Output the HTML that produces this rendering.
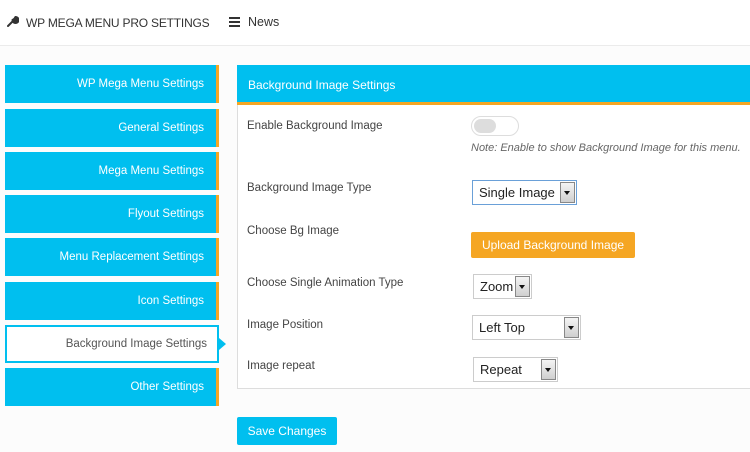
<!DOCTYPE html>
<html><head><style>
*{box-sizing:border-box;margin:0;padding:0}
body{width:750px;height:452px;background:#fcfcfc;font-family:"Liberation Sans",sans-serif;color:#444;position:relative;overflow:hidden;font-size:12px}
.a{position:absolute}
.top{left:0;top:0;width:750px;height:46px;border-bottom:1px solid #ebebeb;background:#fff}
.tab{position:absolute;left:5px;width:214px;height:38px;background:#00bfef;border-right:3px solid #f5a623;color:#fff;text-align:right;padding-right:12px;line-height:38px;font-size:11.5px}
.tab.act{background:#fff;border:2px solid #00bfef;color:#555;line-height:34px;padding-right:10px}
.lbl{position:absolute;left:247px;font-size:11.5px;color:#444}
.sel{position:absolute;height:25px;border:1px solid #ccc;background:#fff;font-size:13px;color:#222;padding-left:6px;line-height:23px}
.sel i{position:absolute;right:1px;top:1px;bottom:1px;width:15px;border:1px solid #888;background:linear-gradient(#f4f4f4,#cfcfcf)}
.sel i:after{content:"";position:absolute;left:3px;top:8px;border-left:3px solid transparent;border-right:3px solid transparent;border-top:4px solid #111}
</style></head><body>
<div class="a top"></div>
<svg class="a" style="left:7px;top:15px" width="12" height="12" viewBox="0 0 12 12"><path d="M1 11 L6 6 M5.5 5 A3 3 0 1 0 8.5 2 L7.5 3.5 L8.8 3.2 L8.5 4.5 L7 4 Z" stroke="#333" stroke-width="2" fill="#333" stroke-linecap="round"/></svg>
<div class="a" style="left:26px;top:16px;font-size:12px;color:#333;letter-spacing:-0.2px">WP MEGA MENU PRO SETTINGS</div>
<div class="a" style="left:229px;top:17px;width:11px;height:2px;background:#333;box-shadow:0 4px 0 #333,0 8px 0 #333"></div>
<div class="a" style="left:248px;top:15px;font-size:12.5px;color:#333">News</div>

<div class="tab" style="top:65px">WP Mega Menu Settings</div>
<div class="tab" style="top:109px">General Settings</div>
<div class="tab" style="top:152px">Mega Menu Settings</div>
<div class="tab" style="top:195px">Flyout Settings</div>
<div class="tab" style="top:238px">Menu Replacement Settings</div>
<div class="tab" style="top:282px">Icon Settings</div>
<div class="tab act" style="top:325px">Background Image Settings</div>
<div class="a" style="left:219px;top:338px;border-top:6px solid transparent;border-bottom:6px solid transparent;border-left:7px solid #00bfef"></div>
<div class="tab" style="top:368px">Other Settings</div>

<div class="a" style="left:237px;top:65px;width:520px;height:324px;background:#fff;border:1px solid #ddd"></div>
<div class="a" style="left:237px;top:65px;width:520px;height:40px;background:#00bfef;border-bottom:3px solid #f5a623;color:#fff;font-size:12px;padding:13px 0 0 11px">Background Image Settings</div>

<div class="lbl" style="top:120px">Enable Background Image</div>
<div class="a" style="left:471px;top:116px;width:48px;height:20px;border:1px solid #ddd;border-radius:10px;background:#fff"><div style="position:absolute;left:2px;top:2px;width:22px;height:14px;border-radius:7px;background:#ddd"></div></div>
<div class="a" style="left:471px;top:142px;font-size:11px;font-style:italic;color:#666;white-space:nowrap">Note: Enable to show Background Image for this menu.</div>

<div class="lbl" style="top:182px">Background Image Type</div>
<div class="sel" style="left:472px;top:180px;width:105px;border-color:#6aa0d8">Single Image<i></i></div>

<div class="lbl" style="top:225px">Choose Bg Image</div>
<div class="a" style="left:471px;top:232px;width:164px;height:26px;background:#f5a623;border-radius:2px;color:#fff;text-align:center;line-height:26px;font-size:12px">Upload Background Image</div>

<div class="lbl" style="top:277px">Choose Single Animation Type</div>
<div class="sel" style="left:473px;top:274px;width:59px">Zoom<i></i></div>

<div class="lbl" style="top:319px">Image Position</div>
<div class="sel" style="left:472px;top:315px;width:109px">Left Top<i></i></div>

<div class="lbl" style="top:360px">Image repeat</div>
<div class="sel" style="left:473px;top:357px;width:85px">Repeat<i></i></div>

<div class="a" style="left:237px;top:417px;width:100px;height:28px;background:#00bfef;border-radius:2px;color:#fff;text-align:center;line-height:28px;font-size:12px">Save Changes</div>
</body></html>
